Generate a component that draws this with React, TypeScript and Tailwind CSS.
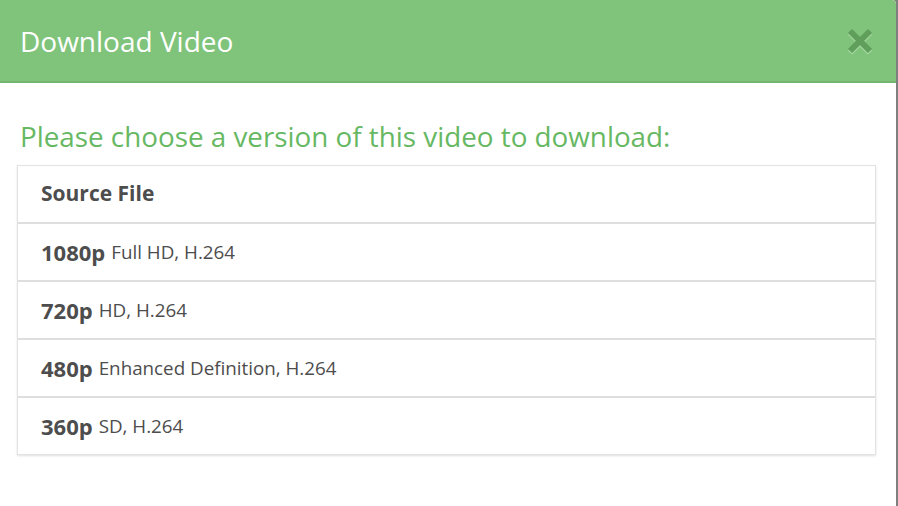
const versions = [
  { res: "1080p", desc: "Full HD, H.264" },
  { res: "720p", desc: "HD, H.264" },
  { res: "480p", desc: "Enhanced Definition, H.264" },
  { res: "360p", desc: "SD, H.264" },
];

export default function App() {
  return (
    <div className="flex h-[506px] w-[898px] bg-[#7f7f7f] font-['Open_Sans',sans-serif]">
      <div className="flex h-full w-[896px] flex-col overflow-hidden rounded-tr-[4px] bg-white">
        {/* Header */}
        <div className="flex h-[83px] shrink-0 items-center justify-between border-b-2 border-[#74b670] bg-[#80c47c] pl-5 pr-[23px]">
          <h1 className="text-[28px] font-normal leading-none text-white">
            Download Video
          </h1>
          <button className="mt-[1px]">
            <svg width="26" height="26" viewBox="0 0 26 26">
              <g stroke="#a6d9a2" strokeWidth="6" strokeLinecap="butt" transform="translate(0 1.5)">
                <line x1="3" y1="3" x2="23" y2="23" />
                <line x1="23" y1="3" x2="3" y2="23" />
              </g>
              <g stroke="#5f9f5b" strokeWidth="6" strokeLinecap="butt">
                <line x1="3" y1="3" x2="23" y2="23" />
                <line x1="23" y1="3" x2="3" y2="23" />
              </g>
            </svg>
          </button>
        </div>

        {/* Body */}
        <div className="px-[17px] pt-[34px]">
          <p className="pl-[3px] text-[27.8px] leading-[38px] text-[#67b863]">
            Please choose a version of this video to download:
          </p>
          <div className="mt-[10px] w-[859px] border border-[#e3e3e3] shadow-[0_1px_2px_rgba(0,0,0,0.12)]">
            <div className="flex h-[56px] items-center px-[23px] text-[21px] font-bold text-[#4d4d4d]">
              Source File
            </div>
            {versions.map((v) => (
              <div
                key={v.res}
                className="flex h-[58px] items-center gap-[6px] border-t-2 border-[#dedede] px-[23px] text-[#4d4d4d]"
              >
                <span className="text-[22px] font-bold">{v.res}</span>
                <span className="text-[18.8px]">{v.desc}</span>
              </div>
            ))}
          </div>
        </div>
      </div>
    </div>
  );
}
